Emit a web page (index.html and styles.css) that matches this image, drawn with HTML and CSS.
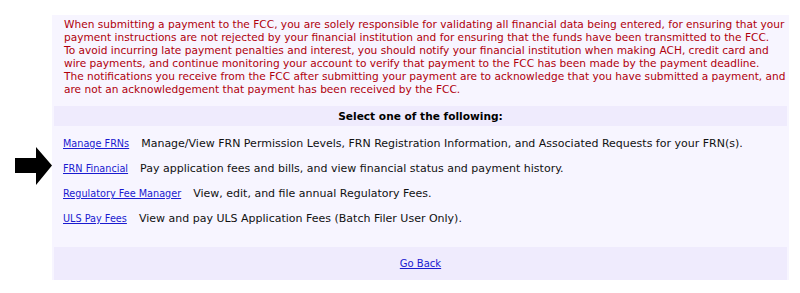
FILE: index.html
```html
<!DOCTYPE html>
<html lang="en">
<head>
    <meta charset="UTF-8">
    <title>FCC Financial Options</title>
    <link rel="stylesheet" href="styles.css">
</head>
<body>
    <svg class="pointer" width="40" height="40" viewBox="0 0 40 40">
        <polygon points="0,11 21,11 21,0 37,18.5 21,38 21,26 0,26" fill="#000"/>
    </svg>
    <div class="panel">
        <div class="notice">
            <p>When submitting a payment to the FCC, you are solely responsible for validating all financial data being entered, for ensuring that your payment instructions are not rejected by your financial institution and for ensuring that the funds have been transmitted to the FCC.</p>
            <p>To avoid incurring late payment penalties and interest, you should notify your financial institution when making ACH, credit card and wire payments, and continue monitoring your account to verify that payment to the FCC has been made by the payment deadline.</p>
            <p>The notifications you receive from the FCC after submitting your payment are to acknowledge that you have submitted a payment, and are not an acknowledgement that payment has been received by the FCC.</p>
        </div>
        <div class="head">Select one of the following:</div>
        <div class="options">
            <div class="option"><a href="#">Manage FRNs</a><span>Manage/View FRN Permission Levels, FRN Registration Information, and Associated Requests for your FRN(s).</span></div>
            <div class="option"><a href="#">FRN Financial</a><span>Pay application fees and bills, and view financial status and payment history.</span></div>
            <div class="option"><a href="#">Regulatory Fee Manager</a><span>View, edit, and file annual Regulatory Fees.</span></div>
            <div class="option"><a href="#">ULS Pay Fees</a><span>View and pay ULS Application Fees (Batch Filer User Only).</span></div>
        </div>
        <div class="foot"><a href="#">Go Back</a></div>
    </div>
</body>
</html>
```

FILE: styles.css
```css
body {
    margin: 0;
    background: #fff;
    font-family: 'DejaVu Sans', Verdana, sans-serif;
    font-size: 10px;
}
.pointer {
    position: absolute;
    left: 15px;
    top: 147px;
}
.panel {
    margin: 15px 0 0 52px;
    width: 733px;
    padding: 0 2px 0 2px;
    background: #f7f5ff;
}
.notice {
    color: #b0000c;
    font-size: 10.6px;
    padding: 3px 0 10px 10px;
    line-height: 13px;
}
.notice p {
    margin: 0;
}
.head {
    background: #efebfd;
    height: 20px;
    line-height: 20px;
    text-align: center;
    font-weight: bold;
    font-size: 10.6px;
    color: #000;
}
.options {
    padding: 5px 0 16px 9px;
}
.option {
    height: 25px;
    line-height: 25px;
    color: #111;
    font-size: 11px;
}
.option a {
    font-size: 9.7px;
    margin-right: 12px;
}
a {
    color: #1a1ad0;
    text-decoration: underline;
}
.foot {
    background: #efebfd;
    height: 33px;
    line-height: 33px;
    text-align: center;
}
```
